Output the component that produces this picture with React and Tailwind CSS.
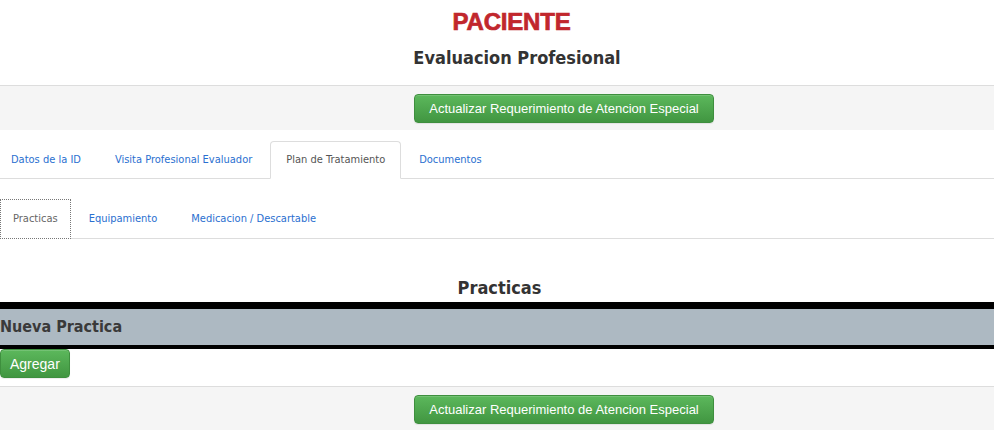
import React, { useState } from "react";

const mainTabs = [
  { id: 0, name: "Datos de la ID" },
  { id: 1, name: "Visita Profesional Evaluador" },
  { id: 2, name: "Plan de Tratamiento" },
  { id: 3, name: "Documentos" },
];

const subTabs = [
  { id: 0, name: "Practicas" },
  { id: 1, name: "Equipamiento" },
  { id: 2, name: "Medicacion / Descartable" },
];

const tahoma = { fontFamily: '"DejaVu Sans Condensed", "DejaVu Sans", sans-serif' };

const GreenButton = ({ children, className = "" }) => (
  <button
    className={`bg-gradient-to-b from-[#5cb85c] to-[#419641] border border-[#3e8f3e] text-white rounded-[4px] shadow-[inset_0_1px_0_rgba(255,255,255,0.15),0_1px_1px_rgba(0,0,0,0.075)] ${className}`}
    style={{ fontFamily: '"Liberation Sans", Arial, sans-serif' }}
  >
    {children}
  </button>
);

const UpdateBar = () => (
  <div className="border-t border-[#dddddd] bg-[#f5f5f5] flex justify-center pl-[134px] pt-[8px] pb-[7px]">
    <GreenButton className="h-[29px] px-[14px] text-[13px] leading-none">
      Actualizar Requerimiento de Atencion Especial
    </GreenButton>
  </div>
);

export default function App() {
  const [activeTab, setActiveTab] = useState(2);
  const [activeSub, setActiveSub] = useState(0);

  return (
    <div className="w-[994px] h-[430px] overflow-hidden bg-white text-[#333333]">
      <div className="flex flex-col items-center pt-[9px]">
        <div
          className="text-[#c1272d] text-[24px] leading-[26px] tracking-[-0.2px] pl-[29px]"
          style={{ fontFamily: '"Liberation Sans", Arial, sans-serif', fontWeight: 900, WebkitTextStroke: "0.7px #c1272d" }}
        >
          PACIENTE
        </div>
        <h3
          className="text-[18px] font-bold leading-[24px] mt-[11px] mb-[15px] pl-[40px]"
          style={tahoma}
        >
          Evaluacion Profesional
        </h3>
      </div>

      <UpdateBar />

      <ul className="flex border-b border-[#dddddd] mt-[11px] -ml-[5px]" style={tahoma}>
        {mainTabs.map((t) => (
          <li key={t.id} className="-mb-px">
            <a
              onClick={() => setActiveTab(t.id)}
              className={`block h-[38px] leading-[36px] px-[15px] text-[11px] cursor-pointer rounded-t-[4px] border mr-[2px] ${
                activeTab === t.id
                  ? "border-[#dddddd] border-b-white bg-white text-[#555555]"
                  : "border-transparent text-[#2a6fd0]"
              }`}
            >
              {t.name}
            </a>
          </li>
        ))}
      </ul>

      <ul className="flex border-b border-[#dddddd] mt-[20px]" style={tahoma}>
        {subTabs.map((t) => (
          <li key={t.id} className="-mb-px">
            <a
              onClick={() => setActiveSub(t.id)}
              className={`block h-[40px] leading-[38px] text-[11px] cursor-pointer mr-[2px] ${
                activeSub === t.id
                  ? "border border-dotted border-[#777777] bg-white text-[#666666] px-[12px]"
                  : "border border-transparent text-[#2a6fd0] px-[15px]"
              }`}
            >
              {t.name}
            </a>
          </li>
        ))}
      </ul>

      <h4
        className="text-center text-[18px] font-bold leading-[22px] mt-[38px] mb-[3px] pl-[5px]"
        style={tahoma}
      >
        Practicas
      </h4>

      <div className="border-t-[7px] border-b-[4px] border-black bg-[#adb9c2] h-[47px] flex items-center">
        <span className="text-[16px] font-bold text-[#3a3a3a]" style={tahoma}>
          Nueva Practica
        </span>
      </div>

      <div className="h-[37px]">
        <GreenButton className="h-[29px] px-[9px] text-[14px] leading-none">Agregar</GreenButton>
      </div>

      <UpdateBar />
    </div>
  );
}
